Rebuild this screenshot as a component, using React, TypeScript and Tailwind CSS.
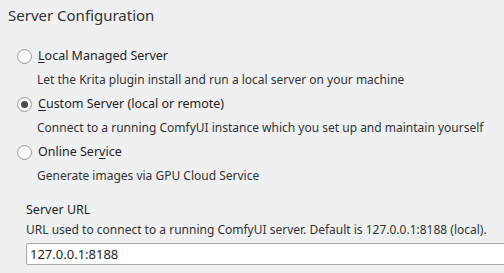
const options = [
  {
    label: (
      <>
        <span className="underline underline-offset-2">L</span>ocal Managed Server
      </>
    ),
    desc: "Let the Krita plugin install and run a local server on your machine",
    checked: false,
  },
  {
    label: (
      <>
        <span className="underline underline-offset-2">C</span>ustom Server (local or remote)
      </>
    ),
    desc: "Connect to a running ComfyUI instance which you set up and maintain yourself",
    checked: true,
  },
  {
    label: (
      <>
        Online Ser<span className="underline underline-offset-2">v</span>ice
      </>
    ),
    desc: "Generate images via GPU Cloud Service",
    checked: false,
  },
];

function Radio({ checked }: { checked: boolean }) {
  return (
    <span className="flex h-[15px] w-[15px] shrink-0 items-center justify-center rounded-full border border-[#9a9a9a] bg-gradient-to-b from-[#ffffff] to-[#f4f4f4]">
      {checked && <span className="h-[7px] w-[7px] rounded-full bg-[#4a4a4a]" />}
    </span>
  );
}

export default function App() {
  return (
    <div
      className="h-[273px] w-[504px] overflow-hidden bg-[#eff0f1] text-[13px] text-[#232323]"
      style={{ fontFamily: '"Noto Sans", "Open Sans", sans-serif' }}
    >
      <h1 className="pl-2 pt-[3px] text-[15px] font-normal leading-6 text-[#333]">Server Configuration</h1>
      <div className="mt-[17px] flex flex-col pl-[17px]">
        {options.map((o, i) => (
          <div key={i} className="flex flex-col">
            <div className="flex h-6 items-center gap-[6px]">
              <Radio checked={o.checked} />
              <span className="text-[12.5px] leading-6">{o.label}</span>
            </div>
            <div className="pl-[20px] text-[12px] leading-6 text-[#333]">{o.desc}</div>
          </div>
        ))}
      </div>
      <div className="mt-[12px] pl-[26px]">
        <div className="text-[12.5px] leading-5">Server URL</div>
        <div className="text-[12px] leading-5 text-[#333]">
          URL used to connect to a running ComfyUI server. Default is 127.0.0.1:8188 (local).
        </div>
        <input
          readOnly
          value="127.0.0.1:8188"
          className="mt-[3px] h-[22px] w-[500px] rounded-[2px] border border-[#a8a8a8] bg-white px-[3px] text-[13px] text-[#232323] outline-none"
        />
      </div>
    </div>
  );
}
